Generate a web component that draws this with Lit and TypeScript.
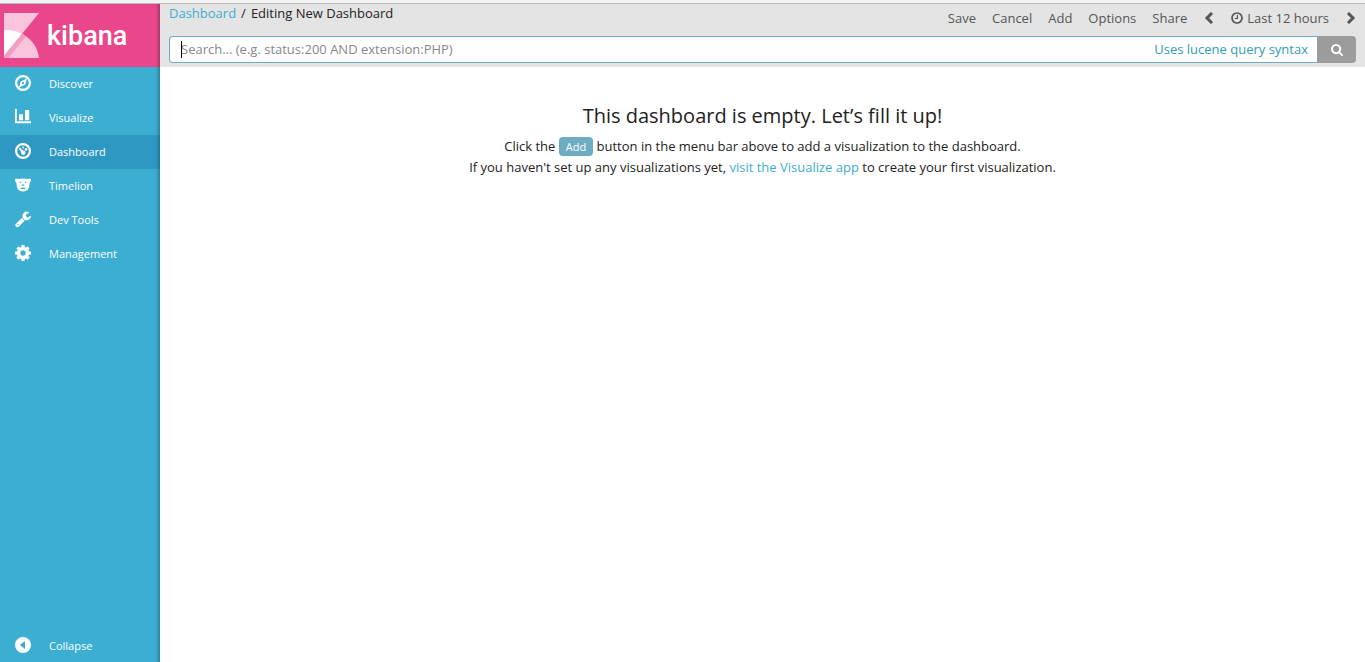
import { LitElement, html, css, svg } from "lit";
import { customElement, property } from "lit/decorators.js";

const icons = {
  discover: svg`<svg viewBox="0 0 16 16"><circle cx="8" cy="8" r="6.9" fill="none" stroke="currentColor" stroke-width="2.2"/><path fill="currentColor" fill-rule="evenodd" d="M12 3.6 10.3 9.4 4 12.4 5.7 6.6ZM7.2 7.4v2.1l1.9-1.1V6.4Z"/></svg>`,
  visualize: svg`<svg viewBox="0 0 16 16"><path fill="currentColor" d="M0 0h1.8v12.2H16v2H0zM4 5.2h4v6H4zM10 1h4.2v10.2H10z"/></svg>`,
  dashboard: svg`<svg viewBox="0 0 16 16"><circle cx="8" cy="8" r="6.9" fill="none" stroke="currentColor" stroke-width="2.2"/><path fill="none" stroke="currentColor" stroke-width="2" stroke-linecap="round" d="M5 5.8 8 9.4"/><g fill="currentColor"><circle cx="8.3" cy="9.8" r="2.2"/><circle cx="8.2" cy="4.6" r="1"/><circle cx="11" cy="6.4" r="1.3"/></g></svg>`,
  timelion: svg`<svg viewBox="0 0 16 16"><path fill="currentColor" fill-rule="evenodd" d="M0 2.2Q1.4 1 3.2 2 8 1 12.8 2 14.6 1 16 2.2 16.2 4.8 14.6 6L14 10.6Q12.4 14.6 8 14.6T2 10.6L1.4 6Q-.2 4.8 0 2.2ZM4.7 4.7v1.4h1.4V4.7ZM9.9 4.7v1.4h1.4V4.7ZM6.8 7.6v1.2h2.4V7.6ZM5.6 10.9v1h4.8v-1l-2.4-.5Z"/></svg>`,
  tools: svg`<svg viewBox="64 64 1664 1664"><path fill="currentColor" d="M448 1472q0-26-19-45t-45-19-45 19-19 45 19 45 45 19 45-19 19-45zm644-420l-682 682q-37 37-90 37-52 0-91-37l-106-108q-38-36-38-90 0-53 38-91l681-681q39 98 114.5 173.5t173.5 114.5zm634-435q0 39-23 106-47 134-164.5 217.5t-258.5 83.5q-185 0-316.5-131.5t-131.5-316.5 131.5-316.5 316.5-131.5q58 0 121.5 16.5t107.5 46.5q16 11 16 28t-16 28l-293 169v224l193 107q5-3 79-48.5t135.5-81 70.5-35.5q15 0 23.5 10t8.5 25z"/></svg>`,
  management: svg`<svg viewBox="128 128 1536 1536"><path fill="currentColor" d="M1152 896q0-106-75-181t-181-75-181 75-75 181 75 181 181 75 181-75 75-181zm512-109v222q0 12-8 23t-20 13l-185 28q-19 54-39 91 35 50 107 138 10 12 10 25t-9 23q-27 37-99 108t-94 71q-12 0-26-9l-138-108q-44 23-91 38-16 136-29 186-7 28-36 28h-222q-14 0-24.5-8.5t-11.5-21.5l-28-184q-49-16-90-37l-141 107q-10 9-25 9-14 0-25-11-126-114-165-168-7-10-7-23 0-12 8-23 15-21 51-66.5t54-70.5q-27-50-41-99l-183-27q-13-2-21-12.5t-8-23.5v-222q0-12 8-23t19-13l186-28q14-46 39-92-40-57-107-138-10-12-10-24 0-10 9-23 26-36 98.5-107.5t94.5-71.5q13 0 26 10l138 107q44-23 91-38 16-136 29-186 7-28 36-28h222q14 0 24.5 8.5t11.5 21.5l28 184q49 16 90 37l142-107q9-9 24-9 13 0 25 10 129 119 165 170 7 8 7 22 0 12-8 23-15 21-51 66.5t-54 70.5q26 50 41 98l183 28q13 2 21 12.5t8 23.5z"/></svg>`,
  collapse: svg`<svg viewBox="0 0 16 16"><path fill="currentColor" fill-rule="evenodd" d="M8 0a8 8 0 1 1 0 16A8 8 0 0 1 8 0ZM10 4 4.8 8 10 12Z"/></svg>`,
  left: svg`<svg viewBox="0 0 12 12"><path fill="none" stroke="currentColor" stroke-width="3" d="M9 1 4 6l5 5"/></svg>`,
  right: svg`<svg viewBox="0 0 12 12"><path fill="none" stroke="currentColor" stroke-width="3" d="m3 1 5 5-5 5"/></svg>`,
  clock: svg`<svg viewBox="0 0 12 12"><circle cx="6" cy="6" r="5" fill="none" stroke="currentColor" stroke-width="1.7"/><path fill="none" stroke="currentColor" stroke-width="1.2" d="M6.4 3v3.5H3.8"/></svg>`,
  search: svg`<svg viewBox="64 128 1664 1664"><path fill="currentColor" d="M1216 832q0-185-131.5-316.5t-316.5-131.5-316.5 131.5-131.5 316.5 131.5 316.5 316.5 131.5 316.5-131.5 131.5-316.5zm512 832q0 52-38 90t-90 38q-54 0-90-38l-343-342q-179 124-399 124-143 0-273.5-55.5t-225-150-150-225-55.5-273.5 55.5-273.5 150-225 225-150 273.5-55.5 273.5 55.5 225 150 150 225 55.5 273.5q0 220-124 399l343 343q37 37 37 90z"/></svg>`,
};

type IconName = keyof typeof icons;

const navItems: { label: string; icon: IconName }[] = [
  { label: "Discover", icon: "discover" },
  { label: "Visualize", icon: "visualize" },
  { label: "Dashboard", icon: "dashboard" },
  { label: "Timelion", icon: "timelion" },
  { label: "Dev Tools", icon: "tools" },
  { label: "Management", icon: "management" },
];

@customElement("side-nav")
class SideNav extends LitElement {
  @property() active = "Dashboard";

  static styles = css`
    :host {
      display: flex;
      flex-direction: column;
      background: #3caed2;
      box-shadow: inset -5px 0 4px -4px rgba(0, 0, 0, 0.4);
    }
    svg {
      display: block;
      width: 16px;
      height: 16px;
    }
    .brand {
      display: flex;
      align-items: center;
      gap: 8px;
      height: 63px;
      padding-left: 4px;
      color: #fff;
      background: #e8478b;
      box-shadow: inset -5px 0 4px -4px rgba(0, 0, 0, 0.4);
      font-family: Roboto, "Open Sans", sans-serif;
      font-size: 27px;
      font-weight: 500;
      line-height: 32px;
      text-decoration: none;
    }
    .brand svg {
      width: 35px;
      height: 45px;
    }
    .items {
      flex: 1;
    }
    .item {
      display: flex;
      align-items: center;
      gap: 18px;
      box-sizing: border-box;
      width: 100%;
      height: 34px;
      padding: 0 0 0 15px;
      border: 0;
      color: #fff;
      background: none;
      font: inherit;
      font-size: 11px;
      text-decoration: none;
    }
    .items .item {
      padding-bottom: 2px;
    }
    .active {
      background: rgba(0, 90, 150, 0.25);
    }
  `;

  render() {
    return html`
      <a class="brand" href="#">
        <svg viewBox="0 0 35 45" aria-hidden="true">
          <path fill="#f9c4dc" d="M0 0h35L0 43z" />
          <path fill="#f9c4dc" d="M18 20.8Q33 29 35 45H0z" />
          <path fill="#fff" d="M0 17Q10 16.5 18 20.8L0 43z" />
          <path fill="#f29fc3" d="M18 20.8 22 23.4 4.5 45H0v-2z" />
        </svg>
        <span>kibana</span>
      </a>
      <nav class="items">
        ${navItems.map(
          (i) => html`<a class="item ${i.label === this.active ? "active" : ""}" href="#">${icons[i.icon]}<span>${i.label}</span></a>`
        )}
      </nav>
      <button class="item">${icons.collapse}<span>Collapse</span></button>
    `;
  }
}

@customElement("top-bar")
class TopBar extends LitElement {
  static styles = css`
    :host {
      display: block;
      height: 63px;
      background: #e4e4e4;
    }
    svg {
      display: block;
      width: 12px;
      height: 12px;
    }
    a {
      color: #3caed2;
      text-decoration: none;
    }
    button {
      display: flex;
      align-items: center;
      gap: 4px;
      padding: 0;
      border: 0;
      color: #555;
      background: none;
      font: inherit;
    }
    .row {
      display: flex;
      justify-content: space-between;
      height: 32px;
      padding: 0 8px 0 9px;
    }
    .crumbs {
      display: flex;
      gap: 5px;
      line-height: 18px;
      color: #222;
    }
    .menu {
      display: flex;
      align-items: center;
      gap: 16px;
      height: 28px;
    }
    .search {
      display: flex;
      height: 27px;
      margin: 0 9px;
    }
    .field {
      position: relative;
      display: flex;
      flex: 1;
      align-items: center;
      box-sizing: border-box;
      padding: 0 9px 0 11px;
      border: 1px solid #6eadc1;
      border-right: 0;
      border-radius: 4px 0 0 4px;
      background: #fff;
    }
    .caret {
      position: absolute;
      left: 11px;
      top: 4px;
      width: 1px;
      height: 17px;
      background: #000;
    }
    input {
      flex: 1;
      min-width: 0;
      padding: 0;
      border: 0;
      outline: 0;
      color: #222;
      background: none;
      font: inherit;
    }
    input::placeholder {
      color: #888;
      opacity: 1;
    }
    .field a {
      color: #329bb8;
    }
    .submit {
      justify-content: center;
      width: 39px;
      border-radius: 0 4px 4px 0;
      color: #fff;
      background: #9c9c9c;
    }
  `;

  render() {
    return html`
      <div class="row">
        <div class="crumbs"><a href="#">Dashboard</a><span>/</span><span>Editing New Dashboard</span></div>
        <div class="menu">
          ${["Save", "Cancel", "Add", "Options", "Share"].map((t) => html`<button>${t}</button>`)}
          <button aria-label="Earlier">${icons.left}</button>
          <button>${icons.clock}<span>Last 12 hours</span></button>
          <button aria-label="Later">${icons.right}</button>
        </div>
      </div>
      <form class="search" @submit=${(e: Event) => e.preventDefault()}>
        <div class="field">
          <span class="caret"></span>
          <input type="text" aria-label="Search" placeholder="Search... (e.g. status:200 AND extension:PHP)" />
          <a href="#">Uses lucene query syntax</a>
        </div>
        <button class="submit" aria-label="Submit search">${icons.search}</button>
      </form>
    `;
  }
}

@customElement("app-root")
class AppRoot extends LitElement {
  static styles = css`
    :host {
      display: flex;
      flex-direction: column;
      min-height: 100vh;
      color: #222;
      background: #fff;
      font: 13px/21px "Open Sans", "Noto Sans", sans-serif;
    }
    .strip {
      box-sizing: border-box;
      height: 4px;
      border-bottom: 1px solid #bababa;
      background: #f3f3f3;
    }
    .body {
      display: grid;
      flex: 1;
      grid-template-columns: 160px 1fr;
    }
    .empty {
      padding-top: 32px;
      text-align: center;
    }
    h1 {
      margin: 0 0 4px;
      font-size: 20px;
      font-weight: 400;
      line-height: 33px;
    }
    p {
      margin: 0;
    }
    a {
      color: #3caed2;
      text-decoration: none;
    }
    .add {
      padding: 0 7px;
      border: 0;
      border-radius: 4px;
      color: #fff;
      background: #6eadc1;
      font: inherit;
      font-size: 11px;
      line-height: 19px;
    }
  `;

  render() {
    return html`
      <div class="strip"></div>
      <div class="body">
        <side-nav></side-nav>
        <main>
          <top-bar></top-bar>
          <section class="empty">
            <h1>This dashboard is empty. Let’s fill it up!</h1>
            <p>Click the <button class="add">Add</button> button in the menu bar above to add a visualization to the dashboard.</p>
            <p>If you haven't set up any visualizations yet, <a href="#">visit the Visualize app</a> to create your first visualization.</p>
          </section>
        </main>
      </div>
    `;
  }
}
